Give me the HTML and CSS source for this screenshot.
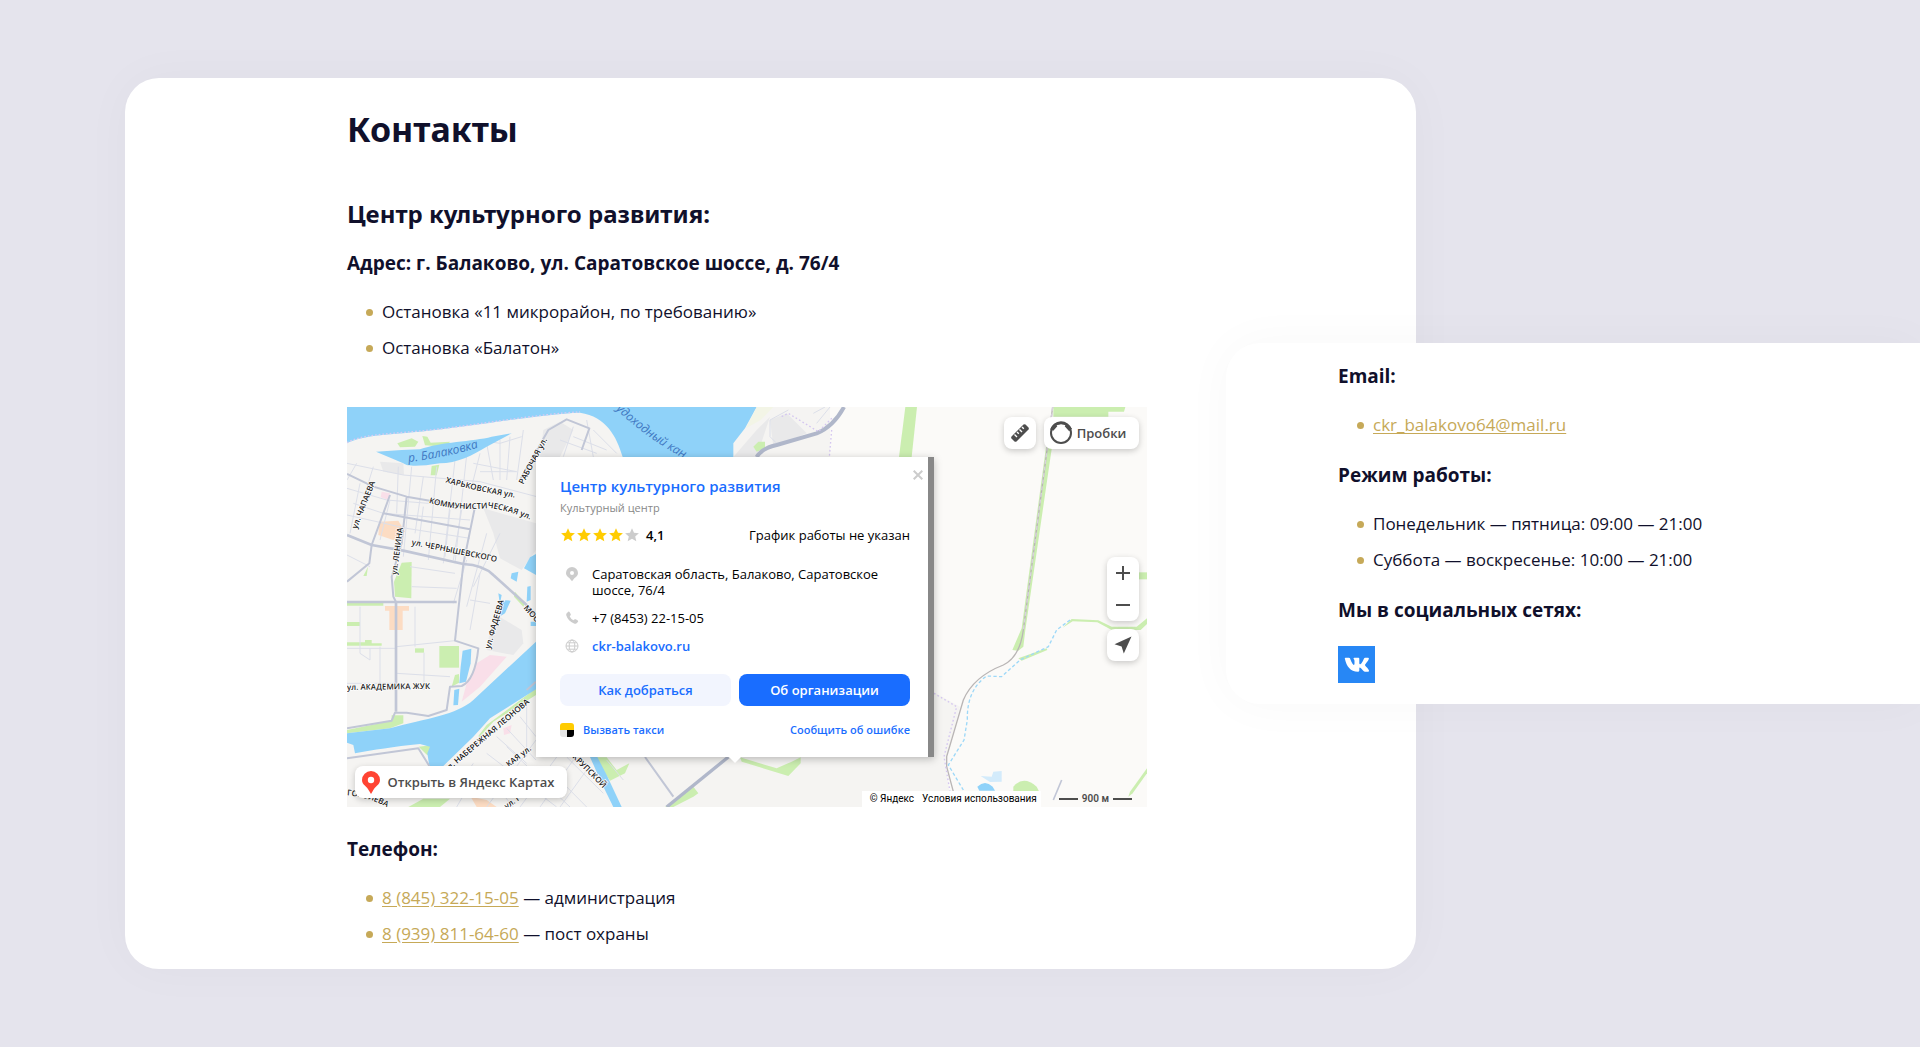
FILE: index.html
```
<!DOCTYPE html>
<html lang="ru">
<head>
<meta charset="utf-8">
<meta name="viewport" content="width=device-width, initial-scale=1">
<title>Контакты — Центр культурного развития</title>
<link rel="stylesheet" href="styles.css">
</head>
<body>
<div class="page">
  <main class="card card-main">
    <h1>Контакты</h1>
    <h2>Центр культурного развития:</h2>
    <h3>Адрес: г. Балаково, ул. Саратовское шоссе, д. 76/4</h3>
    <ul class="list">
      <li>Остановка «11 микрорайон, по требованию»</li>
      <li>Остановка «Балатон»</li>
    </ul>

    <section class="map" aria-label="Карта">
      <svg class="map-tiles" viewBox="21 21 2400 1200" preserveAspectRatio="xMidYMid slice" aria-hidden="true">
        <rect x="21" y="21" width="2400" height="1200" fill="#f5f4f2"/>
        <path d="M1470 21H2421V1221H1835L1815 1090L1860 920L1770 870L1470 700Z" fill="#fbfaf8"/>

        <!-- built-up areas -->
        <g fill="#e9e9ea">
          <path d="M430 325L588 370V450L545 510L480 475L460 400Z"/>
          <path d="M470 645L545 690L550 730L520 765L440 750L450 690Z"/>
          <path d="M610 90L660 65L700 90L650 190L600 170Z"/>
          <path d="M120 185L190 190L192 225L130 215Z"/>
          <path d="M1290 60L1340 40L1400 100L1300 140Z"/>
          <path d="M1250 90L1290 50L1250 171H1180Z"/>
        </g>
        <g fill="#f9dfe9">
          <path d="M410 790L450 765L500 770L420 860L365 905L380 850Z"/>
          <path d="M490 985L515 975L510 1000L492 1005Z"/>
          <path d="M125 275L150 280L145 300L122 292Z"/>
        </g>
        <g fill="#fcdcc3">
          <path d="M118 365L175 362L195 395L160 420L115 405Z"/>
          <path d="M135 618H207V632H188V690H148V632H135Z"/>
          <path d="M392 1190L440 1200L470 1221H410Z"/>
        </g>

        <!-- greenery -->
        <g fill="#cbeeb0">
          <path d="M172 130L215 115L235 125L225 140L180 142Z"/>
          <path d="M247 108L262 110L272 128L330 125L320 140L255 136Z"/>
          <path d="M275 198L298 194L290 226L272 226Z"/>
          <path d="M185 488L215 486L214 595L165 590L162 545Z"/>
          <path d="M70 528L84 500L80 528Z"/>
          <path d="M298 738H357V803H298Z"/>
          <path d="M225 745H252V758H225Z"/>
          <path d="M21 666H60V678H21Z"/>
          <path d="M21 727H75V720H95V730H125V737H21Z"/>
          <path d="M21 609H130V617H21Z"/>
          <path d="M345 825L357 822V848L335 860Z"/>
          <path d="M21 990L155 962V946H190V970L150 985L21 1000Z"/>
          <path d="M236 1040L272 1036L278 1056L262 1066Z"/>
          <path d="M415 1008L440 975L588 865V885L460 965L418 1012Z"/>
          <path d="M765 1072H800L830 1110L868 1090L855 1120L810 1142Z"/>
          <path d="M975 1221L1060 1160L1075 1180L1060 1190L1000 1221Z"/>
          <path d="M205 1221L250 1196H330L300 1221Z"/>
          <path d="M525 575L555 610L550 620L522 590Z"/>
          <path d="M1200 1072L1310 1105L1355 1085L1382 1072V1090L1345 1128L1205 1085Z"/>
          <path d="M1696 21H1731L1715 171H1677Z"/>
          <path d="M2140 21H2356L2352 35H2305V50H2140Z"/>
          <path d="M2118 140H2136L2056 690L2050 740L2035 752L2017 750L2045 685Z"/>
          <path d="M2397 517H2421V538H2397Z"/>
          <path d="M2035 775L2120 745L2122 750L2045 782Z"/>
          <path d="M2168 683L2195 657L2275 661L2315 680H2390L2421 655V672L2402 690H2315L2272 667L2198 664Z"/>
          <path d="M2020 1160Q2050 1125 2090 1160L2100 1180H2020Z"/>
          <path d="M2421 1105L2370 1175L2365 1190L2378 1180L2421 1120Z"/>
        </g>

        <!-- minor streets -->
        <g fill="none" stroke="#dcdfe9" stroke-width="3">
          <path d="M21 190L190 225L420 245L590 290M21 265L140 300L390 320M40 310L130 340L390 360M21 345L200 385L390 415M60 250L30 400M50 190L21 240M100 200L60 330M215 200L190 470M250 230L225 400M290 200L265 480M345 180L310 490M380 165L345 490M420 160L395 260"/>
          <path d="M150 300L120 420M175 200L170 340M250 320L235 440M330 330L315 470M365 330L340 480M415 120L480 130L545 110M400 190L530 215M420 215H530M480 120V240M510 110L500 240M550 90L530 240M440 130L460 240"/>
          <path d="M21 465L90 500M21 745H170M60 620V760L90 780V745M120 740V850M21 850H165M170 740L345 722M252 758V870M170 820L330 830M210 500L345 520M215 560L350 565M225 620V740M420 520L390 690M440 400L380 620M480 400L400 560M380 480L340 610M390 600L450 610M700 80L670 170M740 60L760 171M760 90L830 160M700 110L800 150M660 120L770 160"/>
          <path d="M560 900V1070M540 950L588 1010M500 985L588 1080M470 1010L560 1090M440 1060L650 1221M500 1040L690 1221M420 1100L520 1221M588 1020L440 1221M650 1071L540 1221M700 1080L600 1221M740 1110L660 1221M680 1071L790 1180M800 1080L850 1140M640 1120L740 1221M400 1090L330 1190M350 1221L420 1100"/>
          <path d="M1290 60V110L1310 130M1290 60L1345 30M1420 40L1455 21M1430 70L1470 21"/>
        </g>

        <!-- water -->
        <g fill="#8fd2f9">
          <path d="M21 21H1250L1215 85L1180 130V171H848C830 110 800 50 720 38C600 42 400 80 240 95C120 105 60 108 21 130Z"/>
          <path d="M108 155L185 150L240 148C300 125 400 125 455 110L515 100L440 140C400 165 350 190 300 190C240 200 200 200 190 190Z"/>
          <path d="M21 1000L150 985C260 955 350 945 400 900L588 725V868L450 955L400 1010L310 1098H268L262 1060L270 1040L240 1032C160 1040 100 1050 45 1060L40 1035L21 1028Z"/>
          <path d="M368 752L394 746L392 790L378 845L358 850L362 800Z"/>
          <path d="M343 870L358 866L354 915L340 916Z"/>
          <path d="M588 462V525L552 505L570 472Z"/>
          <path d="M475 580L485 585L482 600L512 602L495 640L478 650L480 615Z"/>
          <path d="M515 520L535 515L530 545L512 535ZM562 560L572 558V600L560 605ZM572 665H588V678H572Z"/>
          <path d="M750 1071H772L800 1125L845 1221H820L785 1150Z"/>
          <path d="M1912 1160Q1935 1138 1958 1160L1965 1172H1918Z"/>
          <path d="M1922 1128L1955 1130L1960 1115L1985 1113V1145L1950 1146Z" fill="#d3ebfb"/>
        </g>
        <path d="M1218 85L1262 60L1300 21H1250Z" fill="#f3f5e6"/>
        <path d="M1240 140L1255 125H1275V145L1250 155Z" fill="#cbeeb0"/>
        <path d="M21 128C60 106 120 103 240 93C400 78 600 40 720 36" fill="none" stroke="#d9ccf2" stroke-width="4" stroke-dasharray="5 6"/>

        <!-- main roads -->
        <g fill="none" stroke="#c1c6d6" stroke-linejoin="round">
          <path stroke-width="8" d="M21 405L95 435L190 452L370 492Q430 495 460 525L560 615L588 650M21 606H350M168 606V935"/>
          <path stroke-width="6" d="M21 222L100 260L200 290L400 325M150 285L95 435L88 490L21 545M130 340L390 388M200 290L185 430L155 530L160 590L168 606M405 320L370 492L345 722L415 745Q405 840 365 858L330 860L320 930L265 948L200 938H165L155 962L21 985"/>
          <path stroke-width="6" d="M540 240L625 90L680 58L748 85L725 150M21 1075L235 1045L268 1098M560 870L588 845"/>
          <path stroke-width="6" d="M915 1071L1000 1190"/>
          <path stroke-width="12" stroke="#b0b7ca" d="M1250 171Q1265 145 1310 135L1430 100Q1480 80 1512 21"/>
          <path stroke-width="10" stroke="#b0b7ca" d="M1165 1071L980 1221"/>
          <path stroke-width="5" d="M2165 1140L2140 1200"/>
        </g>
        <path d="M2138 21L2050 690Q2040 770 1990 795Q1900 830 1870 900L1820 1070V1100L1840 1175" fill="none" stroke="#b9b5b5" stroke-width="4"/>
        <path d="M2138 21L2050 690" fill="none" stroke="#d9d2de" stroke-width="4" stroke-dasharray="12 8"/>
        <g fill="none" stroke="#d4c6f0" stroke-width="4" stroke-dasharray="5 7">
          <path d="M1325 50L1345 40L1435 95L1480 50M1475 90L1468 171M1782 880L1850 920L1812 1070L1830 1175"/>
        </g>
        <path d="M2190 660L2150 690L2125 740L2040 780L1985 830L1940 828Q1880 870 1882 960L1872 1020L1825 1095L1870 1170" fill="none" stroke="#9dd8f8" stroke-width="4" stroke-dasharray="10 7"/>

        <!-- street names -->
        <defs>
          <path id="r1" d="M206 186Q310 175 430 138"/>
          <path id="r2" d="M828 28Q930 125 1060 190"/>
          <path id="s1" d="M50 388L114 226"/>
          <path id="s2" d="M316 247Q430 280 560 298"/>
          <path id="s3" d="M266 308Q350 335 450 324Q520 335 600 372"/>
          <path id="s4" d="M550 254L634 96"/>
          <path id="s5" d="M170 525L192 360"/>
          <path id="s6" d="M214 434L500 492"/>
          <path id="s7" d="M450 748L498 582"/>
          <path id="s8" d="M21 870L320 866"/>
          <path id="s9" d="M330 1110L620 865"/>
          <path id="s10" d="M506 1102L600 1030"/>
          <path id="s11" d="M696 1072L806 1182"/>
          <path id="s12" d="M550 625L600 680"/>
          <path id="s13" d="M21 1186Q90 1190 156 1230"/>
          <path id="s14" d="M500 1228L560 1185"/>
        </defs>
        <g class="water-name">
          <text><textPath href="#r1">р. Балаковка</textPath></text>
          <text><textPath href="#r2">удоходный кан</textPath></text>
        </g>
        <g class="street-name">
          <text><textPath href="#s1">ул. ЧАПАЕВА</textPath></text>
          <text><textPath href="#s2">ХАРЬКОВСКАЯ ул.</textPath></text>
          <text><textPath href="#s3">КОММУНИСТИЧЕСКАЯ ул.</textPath></text>
          <text><textPath href="#s4">РАБОЧАЯ ул.</textPath></text>
          <text><textPath href="#s5">ул. ЛЕНИНА</textPath></text>
          <text><textPath href="#s6">ул. ЧЕРНЫШЕВСКОГО</textPath></text>
          <text><textPath href="#s7">ул. ФАДЕЕВА</textPath></text>
          <text><textPath href="#s8">ул. АКАДЕМИКА ЖУК</textPath></text>
          <text><textPath href="#s9">л. НАБЕРЕЖНАЯ ЛЕОНОВА</textPath></text>
          <text><textPath href="#s10">КАЯ ул.</textPath></text>
          <text><textPath href="#s11">КРУПСКОЙ</textPath></text>
          <text><textPath href="#s12">МОС</textPath></text>
          <text><textPath href="#s13">ГОГОЛЕВА</textPath></text>
          <text><textPath href="#s14">ул. Г</textPath></text>
        </g>
      </svg>

      <div class="map-tools">
        <button class="ctl ctl-square" type="button" aria-label="Линейка">
          <svg width="20" height="20" viewBox="0 0 20 20"><path d="M1.500 13.500L13.500 1.500Q14.500.8 15.500 1.500L18.500 4.500Q19.200 5.500 18.500 6.500L6.500 18.500Q5.500 19.200 4.500 18.500L1.500 15.500Q.8 14.500 1.500 13.500Z" fill="#4d4d4d"/><path d="M4.500 11.500l2.500 2.500M7 9l1.800 1.800M9.500 6.500l2.500 2.500M12 4l1.800 1.800" stroke="#fff" stroke-width="1.400"/></svg>
        </button>
        <button class="ctl ctl-traffic" type="button">
          <svg width="24" height="24" viewBox="0 0 24 24" fill="none" stroke="#4d4d4d"><circle cx="12" cy="12" r="10" stroke-width="2"/><path d="M2.500 9A10 10 0 0 1 21.500 8.500" stroke-width="3"/><path d="M3 8.500L7 4M17 4l4.500 5" stroke-width="3.500"/></svg>
          Пробки
        </button>
      </div>

      <div class="map-nav">
        <div class="zoom">
          <button type="button" aria-label="Приблизить"><svg width="14" height="14" viewBox="0 0 14 14"><path d="M7 0V14M0 7H14" stroke="#4d4d4d" stroke-width="2"/></svg></button>
          <button type="button" aria-label="Отдалить"><svg width="14" height="14" viewBox="0 0 14 14"><path d="M0 7H14" stroke="#4d4d4d" stroke-width="2"/></svg></button>
        </div>
        <button class="ctl ctl-square" type="button" aria-label="Моё местоположение">
          <svg width="18" height="18" viewBox="0 0 18 18"><path d="M17.500.5L9.800 17.500L7.600 10.400L.5 8.200Z" fill="#4d4d4d"/></svg>
        </button>
      </div>

      <a class="ctl open-maps" href="#maps">
        <svg width="18" height="23" viewBox="0 0 18 23"><path d="M9 0a9 9 0 0 1 9 9c0 5-5 6-7.500 11.500L9 23l-1.500-2.500C5 15 0 14 0 9a9 9 0 0 1 9-9Z" fill="#f43"/><circle cx="9" cy="9" r="3.200" fill="#fff"/></svg>
        Открыть в Яндекс Картах
      </a>

      <div class="copyright">
        <div class="terms"><span>© Яндекс</span><a href="#terms">Условия использования</a></div>
        <div class="scale">900 м</div>
      </div>

      <article class="balloon">
        <button class="close" type="button" aria-label="Закрыть"><svg width="10" height="10" viewBox="0 0 10 10"><path d="M.7.7L9.300 9.300M9.300.7L.7 9.300" stroke="#ccc" stroke-width="2"/></svg></button>
        <a class="org-name" href="#org">Центр культурного развития</a>
        <p class="org-kind">Культурный центр</p>
        <div class="org-rating">
          <svg class="stars" width="80" height="16" viewBox="0 0 80 16" role="img" aria-label="Рейтинг 4,1 из 5">
            <defs><path id="star" d="M8 1.200L10 5.800L14.900 6.200L11.200 9.400L12.300 14.200L8 11.700L3.700 14.200L4.800 9.400L1.100 6.200L6 5.800Z"/></defs>
            <g fill="#fc0"><use href="#star"/><use href="#star" x="16"/><use href="#star" x="32"/><use href="#star" x="48"/></g>
            <use href="#star" x="64" fill="#ccc"/>
          </svg>
          <b>4,1</b>
          <span class="hours">График работы не указан</span>
        </div>
        <ul class="org-facts">
          <li>
            <svg width="14" height="16" viewBox="0 0 14 16"><path d="M7 1a6 6 0 0 1 6 6c0 3.500-3.500 4.500-5 7l-1 1.300L6 14C4.500 11.500 1 10.500 1 7a6 6 0 0 1 6-6Z" fill="#ccc"/><circle cx="7" cy="7" r="2" fill="#fff"/></svg>
            <span>Саратовская область, Балаково, Саратовское шоссе, 76/4</span>
          </li>
          <li>
            <svg width="14" height="16" viewBox="0 0 14 16"><path d="M1.500 3.500L3.200 1.800Q4 1.300 4.700 2.200L5.800 4.200Q6 5 5.200 5.800L4.700 6.400Q6 9 8.500 10.300L9.200 9.600Q10 9 10.800 9.300L12.800 10.500Q13.500 11.200 12.900 12L11.300 13.400Q10.500 14 9 13.400C5 12 2.500 9 1.300 5.500Q1 4.200 1.500 3.500Z" fill="#ccc"/></svg>
            <span>+7 (8453) 22-15-05</span>
          </li>
          <li>
            <svg width="14" height="16" viewBox="0 0 14 16" fill="none" stroke="#ccc"><circle cx="7" cy="8" r="6"/><ellipse cx="7" cy="8" rx="2.800" ry="6"/><path d="M1 8H13M2 4.800H12M2 11.200H12"/></svg>
            <a href="#site">ckr-balakovo.ru</a>
          </li>
        </ul>
        <div class="org-actions">
          <button class="btn btn-light" type="button">Как добраться</button>
          <button class="btn btn-blue" type="button">Об организации</button>
        </div>
        <div class="org-foot">
          <a href="#taxi"><svg width="14" height="14" viewBox="0 0 14 14"><path d="M3 0H11A3 3 0 0 1 14 3V7H0V3A3 3 0 0 1 3 0Z" fill="#fc0"/><path d="M0 7H7V14H3A3 3 0 0 1 0 11Z" fill="#e6e6e6"/><path d="M7 7H14V11A3 3 0 0 1 11 14H7Z"/></svg>Вызвать такси</a>
          <a href="#report">Сообщить об ошибке</a>
        </div>
      </article>
    </section>

    <h3>Телефон:</h3>
    <ul class="list">
      <li><a href="tel:88453221505">8 (845) 322-15-05</a> — администрация</li>
      <li><a href="tel:89398116460">8 (939) 811-64-60</a> — пост охраны</li>
    </ul>
  </main>

  <aside class="card card-side">
    <h3>Email:</h3>
    <ul class="list">
      <li><a href="mailto:ckr_balakovo64@mail.ru">ckr_balakovo64@mail.ru</a></li>
    </ul>
    <h3>Режим работы:</h3>
    <ul class="list">
      <li>Понедельник — пятница: 09:00 — 21:00</li>
      <li>Суббота — воскресенье: 10:00 — 21:00</li>
    </ul>
    <h3>Мы в социальных сетях:</h3>
    <a class="vk" href="#vk" aria-label="ВКонтакте">
      <svg width="37" height="37" viewBox="0 0 37 37"><rect width="37" height="37" fill="#2787f5"/><path d="M6.800 12.500Q6.600 11.800 7.600 11.800H10.900Q11.800 11.800 12.100 12.600C13.200 15.800 14.900 18.900 15.900 18.900Q16.500 18.900 16.500 17.600V14.800C16.400 13.300 15.500 13.100 15.500 12.500Q15.600 11.800 16.300 11.800H20.500Q21.300 11.800 21.300 12.700V17.200Q21.400 18.300 22 18.300C23.200 18.300 25.100 14.900 25.900 12.700Q26.200 11.800 27.100 11.800H30Q31.200 11.800 30.800 12.900C30.200 14.800 27.300 18.200 27.300 18.200Q26.700 19 27.300 19.700C28 20.600 30.500 22.800 31 24.400Q31.300 25.800 29.900 25.800H27Q26.200 25.800 25.500 25L23 22.200Q21.300 20.900 21.300 22.500V24.600Q21.300 25.800 19.900 25.800C12.500 25.800 8.500 20.400 6.800 12.500Z" fill="#fff"/></svg>
    </a>
  </aside>
</div>
</body>
</html>
```
FILE: styles.css
```
* {
  box-sizing: border-box;
}

body {
  margin: 0;
  background: #e5e4ed;
  color: #10102b;
  font-family: "Open Sans", "Noto Sans", sans-serif;
  font-size: 17px;
  line-height: 36px;
}

h1, h2, h3, p, ul {
  margin: 0;
}

ul {
  padding: 0;
  list-style: none;
}

button {
  border: 0;
  padding: 0;
  background: none;
  font: inherit;
  color: inherit;
  cursor: pointer;
}

svg {
  flex: none;
}

/* two overlapping cards, the second running to the window edge */
.page {
  display: grid;
  grid-template-columns: 125fr 1101fr 190fr 504fr;
  align-items: center;
  min-height: 100vh;
  overflow: hidden;
}

.card {
  grid-row: 1;
  min-width: 0;
  background: #fff;
  box-shadow: 0 0 50px rgba(20, 20, 40, 0.03);
}

.card-main {
  grid-column: 2 / 4;
  padding: 29px 20px 17px 222px;
  border-radius: 34px;
}

.card-side {
  grid-column: 3 / 5;
  padding: 19px 20px 21px 112px;
  border-radius: 34px 0 0 34px;
}

h1 {
  margin-bottom: 47px;
  font-family: "Noto Sans", sans-serif;
  font-size: 34px;
  line-height: 44px;
}

h2 {
  margin-bottom: 19px;
  font-family: "Noto Sans", sans-serif;
  font-size: 24px;
  line-height: 32px;
}

h3 {
  margin-bottom: 17px;
  font-size: 19px;
  line-height: 28px;
}

.list + h3 {
  margin-top: 18px;
}

.list li {
  position: relative;
  padding-left: 35px;
}

.list li::before {
  content: "";
  position: absolute;
  top: 15px;
  left: 19px;
  width: 7px;
  height: 7px;
  border-radius: 50%;
  background: #c6a958;
}

.list a {
  color: #c6a958;
  text-underline-offset: 2px;
}

.vk {
  display: flex;
  margin-top: 22px;
}

/* map */
.map {
  position: relative;
  max-width: 800px;
  height: 400px;
  margin: 41px 0 28px;
  overflow: hidden;
  font-size: 13px;
  line-height: 16px;
  color: #000;
}

.map-tiles {
  display: block;
  width: 100%;
  height: 100%;
}

.street-name {
  font-size: 24px;
  font-weight: 600;
  fill: #222;
  stroke: #fff;
  stroke-width: 4px;
  paint-order: stroke;
}

.water-name {
  font-size: 36px;
  font-style: italic;
  fill: #3f78c2;
}

.map a {
  color: #196dff;
  text-decoration: none;
}

.ctl, .zoom {
  display: flex;
  align-items: center;
  justify-content: center;
  border-radius: 8px;
  background: #fff;
  box-shadow: 0 2px 6px rgba(0, 0, 0, 0.2);
}

.ctl {
  height: 32px;
}

.ctl-square {
  width: 32px;
}

.map-tools {
  position: absolute;
  top: 10px;
  right: 8px;
  display: flex;
  gap: 8px;
}

.ctl-traffic {
  gap: 4px;
  width: 95px;
  padding-right: 8px;
  color: #4d4d4d;
  font-weight: 600;
}

.map-nav {
  position: absolute;
  top: 150px;
  right: 8px;
  display: grid;
  gap: 8px;
}

.zoom {
  flex-direction: column;
}

.zoom button {
  display: grid;
  place-items: center;
  width: 32px;
  height: 32px;
}

.map .open-maps {
  position: absolute;
  left: 8px;
  bottom: 9px;
  gap: 8px;
  width: 212px;
  padding-right: 6px;
  color: #4d4d4d;
  font-weight: 600;
}

.copyright {
  position: absolute;
  right: 0;
  bottom: 0;
  display: flex;
  align-items: center;
  gap: 18px;
  padding-right: 15px;
  font-family: Roboto, sans-serif;
  font-size: 10px;
}

.terms {
  display: flex;
  gap: 8px;
  padding: 0 4px 0 8px;
  background: #fff;
}

.terms a {
  color: #000;
}

.scale {
  display: flex;
  align-items: center;
  gap: 4px;
  font-weight: 600;
  color: #4d4d4d;
}

.scale::before, .scale::after {
  content: "";
  width: 19px;
  height: 2px;
  background: #4d4d4d;
}

/* organisation balloon */
.balloon {
  position: absolute;
  top: 50px;
  left: 189px;
  width: 398px;
  height: 300px;
  padding: 19px 18px 0 24px;
  border-right: 6px solid #888;
  background: #fff;
  box-shadow: 0 2px 8px rgba(0, 0, 0, 0.25);
}

.balloon::after {
  content: "";
  position: absolute;
  top: 100%;
  left: 193px;
  border: 6px solid transparent;
  border-top-color: #fff;
}

.close {
  position: absolute;
  top: 13px;
  right: 5px;
  display: flex;
}

.org-name {
  display: block;
  font-size: 15px;
  line-height: 20px;
  font-weight: 600;
}

.org-kind {
  margin-top: 4px;
  font-size: 11px;
  color: #888;
}

.org-rating {
  display: flex;
  align-items: center;
  gap: 6px;
  margin-top: 11px;
}

.org-rating b {
  font-weight: 600;
}

.hours {
  margin-left: auto;
}

.org-facts {
  display: grid;
  gap: 12px;
  margin-top: 23px;
  padding-left: 5px;
}

.org-facts li {
  display: flex;
  gap: 13px;
}

.org-facts a {
  font-weight: 600;
}

.org-actions {
  display: grid;
  grid-template-columns: 1fr 1fr;
  gap: 8px;
  margin-top: 20px;
}

.btn {
  height: 32px;
  border-radius: 8px;
  font-weight: 600;
}

.btn-light {
  background: #f2f5fe;
  color: #196dff;
}

.btn-blue {
  background: #196dff;
  color: #fff;
}

.org-foot {
  display: flex;
  justify-content: space-between;
  margin-top: 16px;
  font-size: 11px;
  font-weight: 600;
}

.org-foot a {
  display: flex;
  align-items: center;
  gap: 9px;
}
```
